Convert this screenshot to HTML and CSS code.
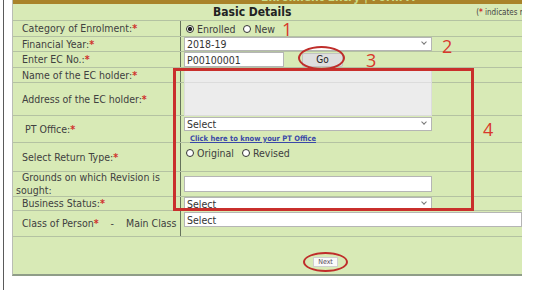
FILE: index.html
```html
<!DOCTYPE html>
<html lang="en">
<head>
  <meta charset="UTF-8" />
  <meta name="viewport" content="width=device-width, initial-scale=1.0"/>
  <title>Basic Details</title>
  <link rel="stylesheet" href="styles.css">
</head>
<body>

  <div class="page">
    <div class="form-panel">
      <div class="panel-head"><span>Enrolment Entry | Form A</span></div>

      <div class="title-row">
        <h2>Basic Details</h2>
        <span class="note">(<span class="req">*</span> indicates mandatory)</span>
      </div>

      <div class="row row-cat">
        <div class="label"><span>Category of Enrolment:<span class="req">*</span></span></div>
        <div class="field">
          <label class="radio"><input type="radio" name="cat" checked> Enrolled</label>
          <label class="radio"><input type="radio" name="cat"> New</label>
        </div>
      </div>

      <div class="row row-fy">
        <div class="label"><span>Financial Year:<span class="req">*</span></span></div>
        <div class="field">
          <span class="select-wrap"><select><option>2018-19</option></select></span>
        </div>
      </div>

      <div class="row row-ec">
        <div class="label"><span>Enter EC No.:<span class="req">*</span></span></div>
        <div class="field">
          <input type="text" class="ec-input" value="P00100001">
          <button class="go-btn">Go</button>
        </div>
      </div>

      <div class="row row-name">
        <div class="label"><span>Name of the EC holder:<span class="req">*</span></span></div>
        <div class="field">
          <input type="text" class="locked" disabled>
        </div>
      </div>

      <div class="row row-addr">
        <div class="label"><span>Address of the EC holder:<span class="req">*</span></span></div>
        <div class="field">
          <textarea class="locked" disabled></textarea>
        </div>
      </div>

      <div class="row row-pt">
        <div class="label label-pt"><span>PT Office:<span class="req">*</span></span></div>
        <div class="field field-stack">
          <span class="select-wrap"><select><option>Select</option></select></span>
          <a href="#" class="pt-link">Click here to know your PT Office</a>
        </div>
      </div>

      <div class="row row-ret">
        <div class="label"><span>Select Return Type:<span class="req">*</span></span></div>
        <div class="field field-top">
          <label class="radio"><input type="radio" name="ret"> Original</label>
          <label class="radio"><input type="radio" name="ret"> Revised</label>
        </div>
      </div>

      <div class="row row-grounds">
        <div class="label"><span>Grounds on which Revision is sought:</span></div>
        <div class="field">
          <input type="text" class="wide-input">
        </div>
      </div>

      <div class="row row-bs">
        <div class="label"><span>Business Status:<span class="req">*</span></span></div>
        <div class="field">
          <span class="select-wrap"><select><option>Select</option></select></span>
        </div>
      </div>

      <div class="row row-class">
        <div class="label label-class"><span>Class of Person<span class="req">*</span><span class="dash">-</span>Main Class</span></div>
        <div class="field field-top">
          <select class="full-select"><option>Select</option></select>
        </div>
      </div>

      <div class="footer">
        <button class="next-btn">Next</button>
      </div>
    </div>

    <!-- annotations drawn over the form -->
    <div class="mark mark-box"></div>
    <div class="mark ring ring-go"></div>
    <div class="mark ring ring-next"></div>
    <span class="mark num num-1">1</span>
    <span class="mark num num-2">2</span>
    <span class="mark num num-3">3</span>
    <span class="mark num num-4">4</span>
  </div>

</body>
</html>
```

FILE: styles.css
```css
body {
  margin: 0;
  background-color: #ffffff;
  color: #404040;
  font-family: "DejaVu Sans Condensed", "DejaVu Sans", sans-serif;
  font-size: 10.5px;
}
.page {
  position: relative;
  margin-left: 3px;
  border-left: 1px solid #5a5a5a;
  padding-left: 8px;
  height: 290px;
  box-sizing: border-box;
}
.form-panel {
  width: 510px;
  box-sizing: border-box;
  background-color: #d8eab6;
  border-left: 1px solid #b9bdb4;
  border-bottom: 2px solid #8f9d88;
}
.panel-head {
  height: 4px;
  overflow: hidden;
  background-color: #a9832a;
}
.panel-head span {
  display: block;
  margin-top: -9px;
  padding-left: 248px;
  font-size: 12px;
  line-height: 12px;
  font-weight: bold;
  color: #c9dc86;
}
.title-row {
  height: 17px;
  box-sizing: border-box;
  border-bottom: 1px solid #b4c2a2;
  display: flex;
  align-items: center;
  overflow: hidden;
}
.title-row h2 {
  margin: 0 0 0 200px;
  font-size: 12px;
  font-weight: bold;
  color: #222;
}
.note {
  margin-left: auto;
  margin-right: -40px;
  font-size: 8px;
  white-space: nowrap;
  color: #444;
}
.req {
  color: #d0312d;
  font-weight: bold;
}
.row {
  display: flex;
  box-sizing: border-box;
  border-bottom: 1px solid #b4c2a2;
}
.label {
  width: 168px;
  flex: none;
  box-sizing: border-box;
  padding-left: 3px;
  border-right: 1px solid #66735c;
  display: flex;
  align-items: center;
  line-height: 13px;
}
.label > span {
  display: block;
  text-indent: 6px;
}
.label-pt > span {
  text-indent: 9px;
}
.label-class > span {
  white-space: nowrap;
}
.dash {
  margin: 0 12px 0 12px;
}
.field {
  flex: 1;
  padding-left: 3px;
  display: flex;
  align-items: center;
  min-width: 0;
}
.field-top {
  align-items: flex-start;
}
.field-stack {
  flex-direction: column;
  align-items: flex-start;
  justify-content: flex-start;
}
.row-cat { height: 16px; }
.row-fy { height: 15px; }
.row-ec { height: 16px; }
.row-name { height: 15px; }
.row-addr { height: 33px; }
.row-pt { height: 27px; }
.row-ret { height: 29px; }
.row-grounds { height: 25px; }
.row-bs { height: 14px; }
.row-class { height: 26px; }

.radio {
  display: flex;
  align-items: center;
  margin-right: 6px;
}
.radio input {
  appearance: none;
  width: 8px;
  height: 8px;
  margin: 0 3px 0 2px;
  border: 1px solid #333;
  border-radius: 50%;
  background-color: #fff;
}
.radio input:checked {
  background: radial-gradient(circle, #222 45%, #fff 55%);
}
.row-ret .radio {
  margin-top: 4px;
}
.select-wrap {
  position: relative;
  display: block;
  width: 248px;
}
.select-wrap::after {
  content: "";
  position: absolute;
  right: 6px;
  top: 3px;
  width: 3px;
  height: 3px;
  border-right: 1px solid #777;
  border-bottom: 1px solid #777;
  transform: rotate(45deg);
}
select,
input[type="text"],
textarea {
  appearance: none;
  box-sizing: border-box;
  font: inherit;
  color: #333;
  background-color: #fff;
  border: 1px solid #b5b5b5;
  border-radius: 0;
  margin: 0;
  padding: 0 0 0 2px;
}
.select-wrap select {
  width: 100%;
  height: 14px;
  line-height: 12px;
}
.ec-input {
  width: 100px;
  height: 15px;
}
.go-btn {
  margin-left: 18px;
  width: 41px;
  height: 14px;
  padding: 0;
  font: inherit;
  font-size: 10px;
  color: #222;
  background-color: #dedede;
  border: 1px solid #c2c2c2;
  border-radius: 2px;
}
.field .locked {
  width: 248px;
  background-color: #ececec;
  border: 1px solid #dcdcdc;
}
.row-name .locked {
  height: 15px;
  margin-top: 1px;
}
.field textarea.locked {
  height: 33px;
  border-top: none;
  resize: none;
}
.row-pt .select-wrap {
  margin-top: 1px;
}
.pt-link {
  margin: 3px 0 0 6px;
  font-size: 7.5px;
  font-weight: bold;
  color: #3a48a8;
  line-height: 9px;
}
.wide-input {
  width: 248px;
  height: 16px;
}
.full-select {
  width: 100%;
  height: 15px;
  margin-top: 1px;
}
.footer {
  height: 37px;
  padding-left: 300px;
  display: flex;
  align-items: center;
  padding-top: 12px;
  box-sizing: border-box;
}
.next-btn {
  width: 25px;
  height: 10px;
  padding: 0;
  font-family: inherit;
  font-size: 7px;
  line-height: 8px;
  color: #5a4a5a;
  background-color: #fafafa;
  border: 1px solid #cfcfcf;
}

.mark {
  position: absolute;
  box-sizing: border-box;
}
.mark-box {
  left: 169px;
  top: 68px;
  width: 301px;
  height: 143px;
  border: 3px solid #c92f2c;
}
.ring {
  border: 2.5px solid #bf2d2a;
  border-radius: 50%;
}
.ring-go {
  left: 294px;
  top: 46px;
  width: 47px;
  height: 24px;
}
.ring-next {
  left: 299px;
  top: 252px;
  width: 45px;
  height: 20px;
}
.num {
  font-family: "Open Sans", "Liberation Sans", sans-serif;
  font-size: 18px;
  line-height: 16px;
  color: #d8382c;
}
.num-1 { left: 278px; top: 21px; }
.num-2 { left: 438px; top: 38px; }
.num-3 { left: 362px; top: 52px; }
.num-4 { left: 479px; top: 121px; }
```
